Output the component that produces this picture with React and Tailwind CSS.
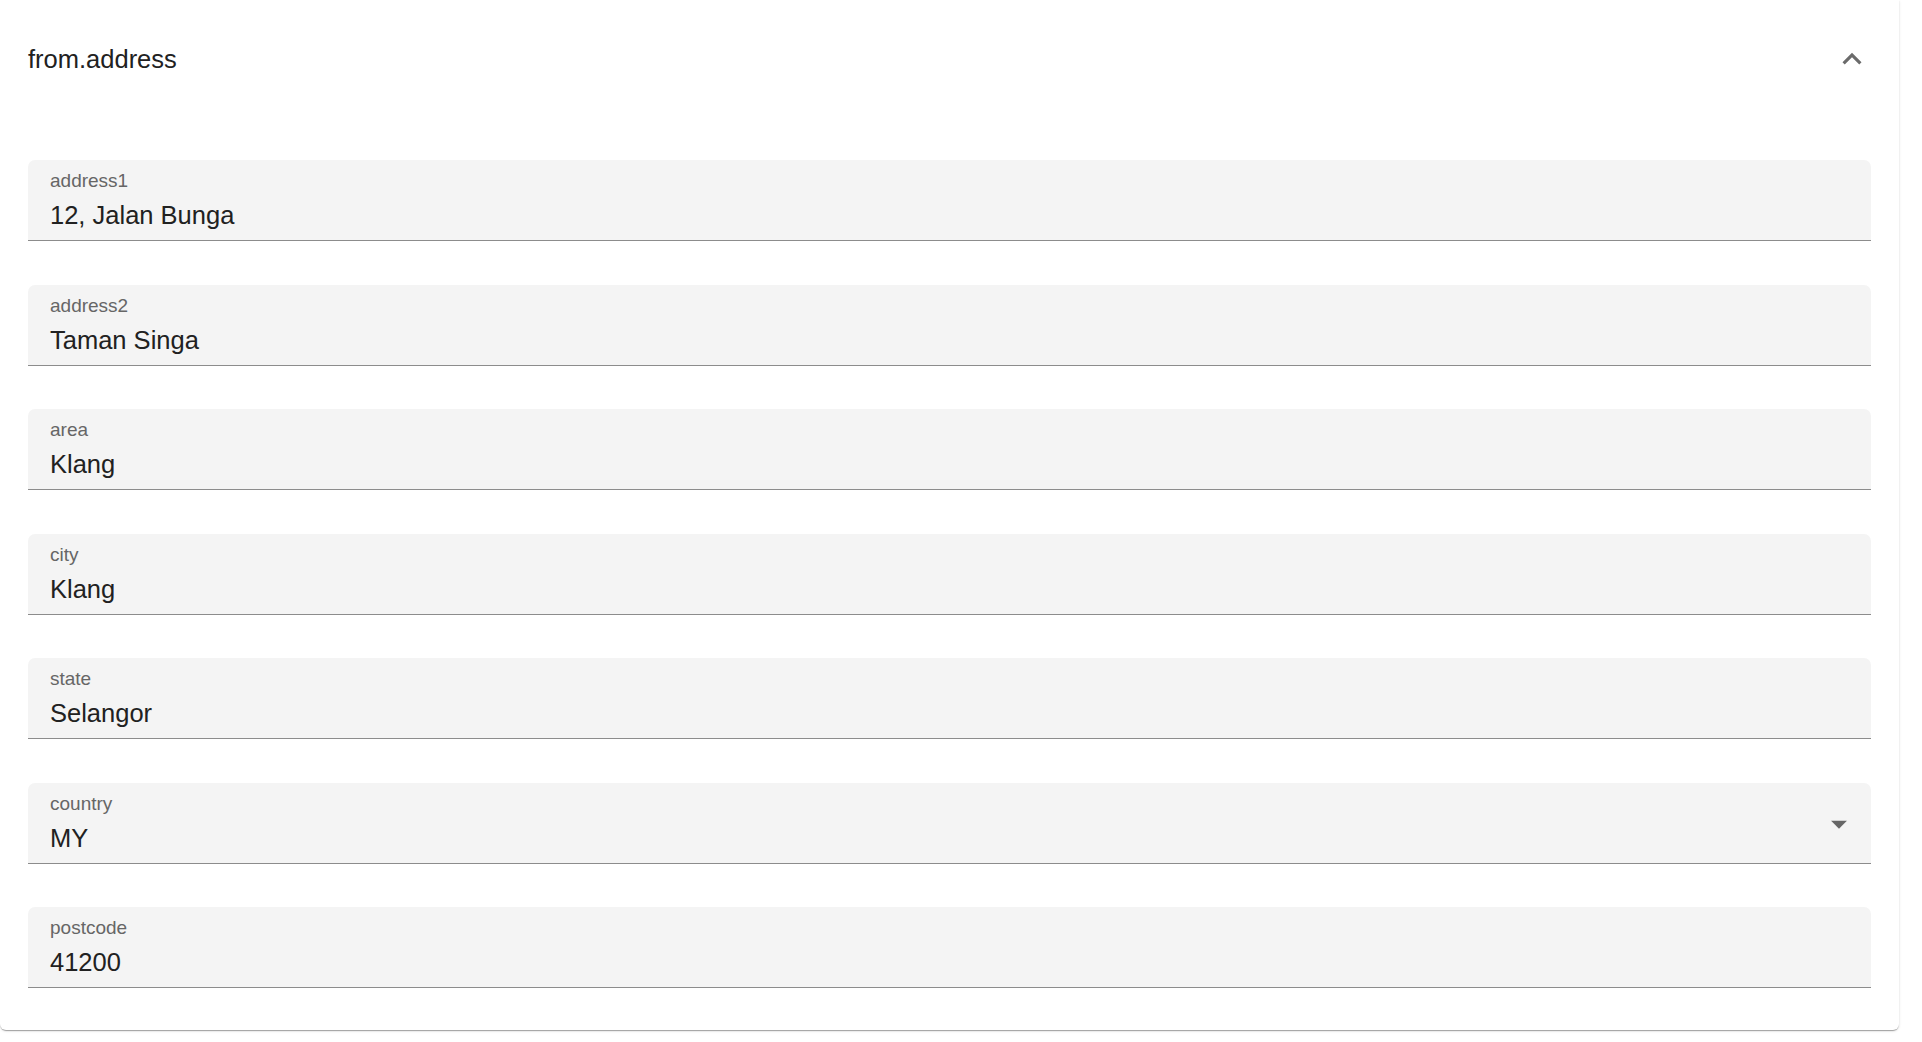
import { useState } from "react";

const fields = [
  { label: "address1", value: "12, Jalan Bunga" },
  { label: "address2", value: "Taman Singa" },
  { label: "area", value: "Klang" },
  { label: "city", value: "Klang" },
  { label: "state", value: "Selangor" },
  { label: "country", value: "MY", select: true },
  { label: "postcode", value: "41200" },
];

function FilledField({ label, value, select }) {
  return (
    <div className="relative h-[81px] bg-[#f4f4f4] rounded-t-[7px] border-b border-[#8c8c8c]">
      <div className="absolute left-[22px] top-[9px] text-[19px] leading-[24px] text-[#666666]">{label}</div>
      <div className="absolute left-[22px] top-[37px] text-[25.5px] leading-[36px] text-[#212121]">{value}</div>
      {select && (
        <svg className="absolute right-[13px] top-[22px] w-[38px] h-[38px] text-[#666666]" viewBox="0 0 24 24" fill="currentColor">
          <path d="M7 10l5 5 5-5z" />
        </svg>
      )}
    </div>
  );
}

export default function App() {
  const [open, setOpen] = useState(true);

  return (
    <div className="min-h-screen bg-white font-['Liberation_Sans',Arial,sans-serif]">
      <div className="w-[1899px] bg-white rounded-b-[6px] shadow-[0_2px_1px_-1px_rgba(0,0,0,0.2),0_1px_1px_0_rgba(0,0,0,0.14),0_1px_3px_0_rgba(0,0,0,0.12)]">
        {/* Summary */}
        <button
          onClick={() => setOpen(!open)}
          className="w-full h-[118px] flex items-center justify-between pl-[28px] pr-[28px] text-left font-['Liberation_Sans',Arial,sans-serif]"
        >
          <span className="text-[25.5px] text-[#212121]">from.address</span>
          <svg className={`w-[38px] h-[38px] text-[#6b6b6b] ${open ? "" : "rotate-180"}`} viewBox="0 0 24 24" fill="currentColor">
            <path d="M12 8l-6 6 1.41 1.41L12 10.83l4.59 4.58L18 14z" />
          </svg>
        </button>

        {/* Details */}
        {open && (
          <div className="flex flex-col gap-[43.5px] px-[28px] pt-[42px] pb-[42px]">
            {fields.map((f) => (
              <FilledField key={f.label} {...f} />
            ))}
          </div>
        )}
      </div>
    </div>
  );
}
